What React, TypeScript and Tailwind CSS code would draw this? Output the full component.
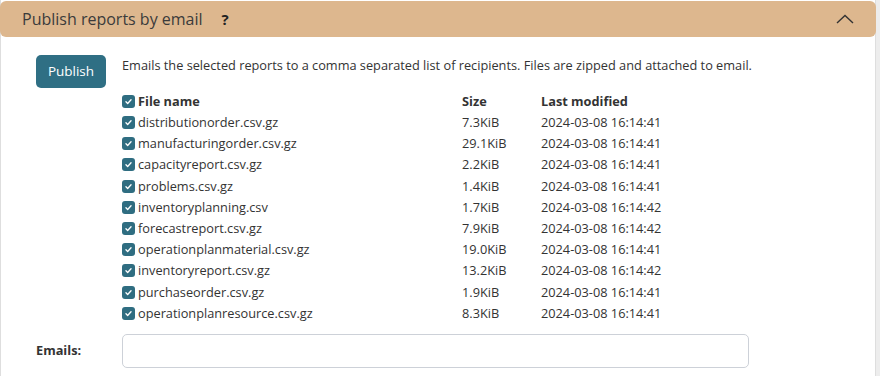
import React from "react";

const rows: [string, string, string][] = [
  ["distributionorder.csv.gz", "7.3KiB", "2024-03-08 16:14:41"],
  ["manufacturingorder.csv.gz", "29.1KiB", "2024-03-08 16:14:41"],
  ["capacityreport.csv.gz", "2.2KiB", "2024-03-08 16:14:41"],
  ["problems.csv.gz", "1.4KiB", "2024-03-08 16:14:41"],
  ["inventoryplanning.csv", "1.7KiB", "2024-03-08 16:14:42"],
  ["forecastreport.csv.gz", "7.9KiB", "2024-03-08 16:14:42"],
  ["operationplanmaterial.csv.gz", "19.0KiB", "2024-03-08 16:14:41"],
  ["inventoryreport.csv.gz", "13.2KiB", "2024-03-08 16:14:42"],
  ["purchaseorder.csv.gz", "1.9KiB", "2024-03-08 16:14:41"],
  ["operationplanresource.csv.gz", "8.3KiB", "2024-03-08 16:14:41"],
];

function Check() {
  return (
    <span className="inline-flex w-[13px] h-[13px] rounded-[3px] bg-[#2f6d81] items-center justify-center mr-[3px] shrink-0">
      <svg width="9" height="9" viewBox="0 0 16 16">
        <path d="M3.5 8.5l3 3 6-6.5" fill="none" stroke="white" strokeWidth="2.4" strokeLinecap="round" strokeLinejoin="round" />
      </svg>
    </span>
  );
}

export default function App() {
  return (
    <div className="w-[880px] h-[376px] bg-[#ededed] overflow-hidden text-[#333]" style={{ fontFamily: '"Open Sans", sans-serif' }}>
      <div className="w-[876px] h-[376px] bg-white border-l border-r border-[#dedede] flex flex-col">
        <div className="h-[36px] mt-[1px] -mx-[1px] bg-[#ddb78e] rounded-[6px] flex items-center pl-[22px] pr-[22px]">
          <span className="text-[16px] text-[#3b3b3b]">Publish reports by email</span>
          <span className="ml-[19px] text-[15px] font-bold text-[#222]">?</span>
          <span className="ml-auto">
            <svg width="18" height="10" viewBox="0 0 18 10">
              <path d="M1 9L9 1.5L17 9" fill="none" stroke="#333" strokeWidth="1.4" />
            </svg>
          </span>
        </div>
        <div className="flex pt-[18px]">
          <div className="w-[121px] pl-[35px] shrink-0">
            <button className="w-[70px] h-[33px] rounded-[5px] bg-[#2f6f84] text-white text-[13.5px]">Publish</button>
          </div>
          <div className="flex-1 text-[12.75px]">
            <div className="leading-[18px] mt-[1px]">Emails the selected reports to a comma separated list of recipients. Files are zipped and attached to email.</div>
            <table className="mt-[17px] border-collapse">
              <thead>
                <tr className="h-[21px]">
                  <th className="text-left font-bold p-0 w-[340px]"><span className="flex items-center"><Check />File name</span></th>
                  <th className="text-left font-bold p-0 w-[79px]">Size</th>
                  <th className="text-left font-bold p-0">Last modified</th>
                </tr>
              </thead>
              <tbody>
                {rows.map((r) => (
                  <tr key={r[0]} className="h-[21.2px]">
                    <td className="p-0"><span className="flex items-center"><Check />{r[0]}</span></td>
                    <td className="p-0">{r[1]}</td>
                    <td className="p-0">{r[2]}</td>
                  </tr>
                ))}
              </tbody>
            </table>
          </div>
        </div>
        <div className="flex items-center mt-[10px]">
          <div className="w-[121px] pl-[35px] text-[12.75px] font-bold">Emails:</div>
          <input className="w-[627px] h-[34px] border border-[#cdd1d8] rounded-[5px]" />
        </div>
      </div>
    </div>
  );
}
